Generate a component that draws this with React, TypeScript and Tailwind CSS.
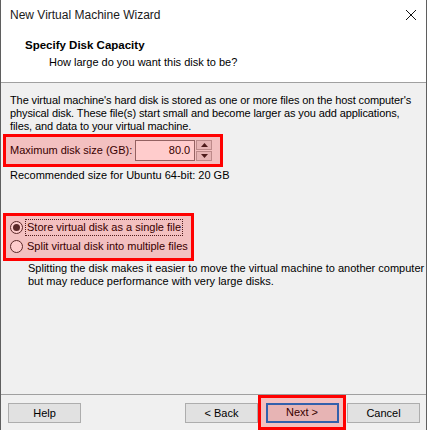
import { useState } from 'react'

function RedBox({ className, children }: { className: string; children: React.ReactNode }) {
  // annotation box: red frame with a translucent tint over the wrapped controls
  return (
    <div className={`relative border-[3px] border-[#ff0000] ${className}`}>
      {children}
      <div className="absolute inset-0 bg-[rgba(255,0,0,0.2)] pointer-events-none" />
    </div>
  )
}

function Radio({ checked, label, focused, onClick }: { checked: boolean; label: string; focused?: boolean; onClick: () => void }) {
  return (
    <label className="flex items-center h-[19px] cursor-default whitespace-nowrap" onClick={onClick}>
      <span className="shrink-0 w-[13px] h-[13px] rounded-full border border-[#333333] bg-white flex items-center justify-center">
        {checked && <span className="w-[7px] h-[7px] rounded-full bg-[#333333]" />}
      </span>
      <span
        className={`ml-[2px] px-[1px] leading-[15px] border border-dotted ${
          focused ? 'border-[#222222]' : 'border-transparent'
        }`}
      >
        {label}
      </span>
    </label>
  )
}

function Btn({ children, primary }: { children: React.ReactNode; primary?: boolean }) {
  return (
    <button
      className={`w-[73px] h-[20px] bg-[#e1e1e1] text-[11px] leading-none ${
        primary ? 'border-2 border-[#0078d7]' : 'border border-[#adadad]'
      }`}
    >
      {children}
    </button>
  )
}

export default function App() {
  const [single, setSingle] = useState(true)

  return (
    <div className="w-[427px] h-[430px] bg-[#f0f0f0] border-x border-[#5f5f5f] flex flex-col font-['Liberation_Sans',Arial,sans-serif] text-[11px] text-black overflow-hidden">
      {/* Barre de titre */}
      <div className="h-[30px] shrink-0 bg-white flex items-center justify-between pl-[9px] pr-[9px]">
        <span className="text-[12px] text-[#1a1a1a]">New Virtual Machine Wizard</span>
        <svg width="12" height="12" viewBox="0 0 12 12">
          <path d="M1 1 L11 11 M11 1 L1 11" stroke="#111111" strokeWidth="1" />
        </svg>
      </div>

      {/* En-tête */}
      <div className="h-[53px] shrink-0 bg-white border-b border-[#a0a0a0] pt-[9px] pl-[24px]">
        <div className="font-bold text-[11.5px] leading-[13px]">Specify Disk Capacity</div>
        <div className="pl-[24px] mt-[4px] leading-[13px]">How large do you want this disk to be?</div>
      </div>

      {/* Contenu */}
      <div className="flex-1 flex flex-col pt-[11px]">
        <p className="px-[9px] leading-[13px] tracking-[-0.1px]">
          The virtual machine's hard disk is stored as one or more files on the host computer's physical disk. These
          file(s) start small and become larger as you add applications, files, and data to your virtual machine.
        </p>

        <RedBox className="ml-[2px] mt-[1px] w-[220px] h-[33px] flex items-center pl-[4px] whitespace-nowrap">
          <span className="shrink-0">Maximum disk size (GB):</span>
          <div className="ml-[3px] flex items-center shrink-0">
            <div className="w-[60px] h-[21px] bg-white border border-[#7a7a7a] flex items-center justify-end pr-[4px]">
              80.0
            </div>
            <div className="ml-[1px] w-[16px] h-[21px] flex flex-col gap-[1px]">
              <div className="flex-1 bg-[#e1e1e1] border border-[#adadad] flex items-center justify-center">
                <svg width="7" height="4" viewBox="0 0 7 4"><path d="M0 4 L3.5 0 L7 4 Z" fill="#222" /></svg>
              </div>
              <div className="flex-1 bg-[#e1e1e1] border border-[#adadad] flex items-center justify-center">
                <svg width="7" height="4" viewBox="0 0 7 4"><path d="M0 0 L3.5 4 L7 0 Z" fill="#222" /></svg>
              </div>
            </div>
          </div>
        </RedBox>

        <div className="px-[9px] mt-[2px] leading-[13px]">Recommended size for Ubuntu 64-bit: 20 GB</div>

        <RedBox className="ml-[2px] mt-[31px] w-[191px] h-[48px] flex flex-col justify-center pl-[4px]">
          <Radio checked={single} focused label="Store virtual disk as a single file" onClick={() => setSingle(true)} />
          <Radio checked={!single} label="Split virtual disk into multiple files" onClick={() => setSingle(false)} />
        </RedBox>

        <p className="pl-[27px] mt-[1px] leading-[13px] whitespace-nowrap">
          Splitting the disk makes it easier to move the virtual machine to another computer
          <br />
          but may reduce performance with very large disks.
        </p>
      </div>

      {/* Boutons */}
      <div className="h-[36px] shrink-0 border-t border-[#a0a0a0] flex items-start pt-[8px] pl-[7px]">
        <Btn>Help</Btn>
        <div className="ml-[104px]">
          <Btn>&lt; Back</Btn>
        </div>
        <RedBox className="-mt-[8px] w-[88px] h-[35px] flex items-center justify-center">
          <Btn primary>Next &gt;</Btn>
        </RedBox>
        <div className="ml-[1px]">
          <Btn>Cancel</Btn>
        </div>
      </div>
    </div>
  )
}
